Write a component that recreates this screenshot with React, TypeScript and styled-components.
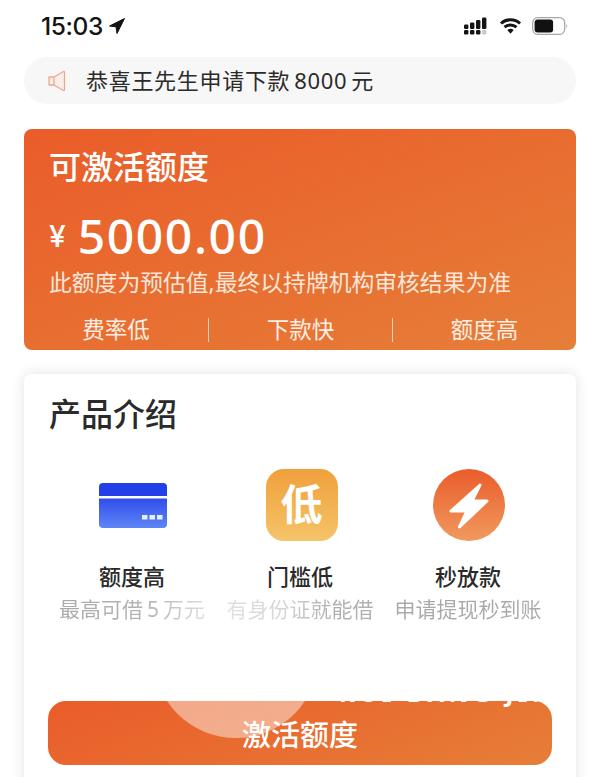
import React from 'react';
import styled, { createGlobalStyle } from 'styled-components';

const GlobalStyle = createGlobalStyle`
  html, body {
    margin: 0;
    padding: 0;
    background: #ffffff;
  }
  body {
    font-family: "Noto Sans", "Noto Sans CJK SC", sans-serif;
  }
`;

const orange = 'linear-gradient(160deg, #ea5c29 0%, #e67e38 100%)';

const Page = styled.div`
  width: 600px;
  height: 777px;
  overflow: hidden;
  background: #ffffff;
`;

const StatusBar = styled.div`
  height: 57px;
  padding: 0 32px 5px 41px;
  box-sizing: border-box;
  display: flex;
  align-items: center;
  justify-content: space-between;
`;

const TimeGroup = styled.div`
  display: flex;
  align-items: center;
  gap: 5px;
`;

const Time = styled.span`
  font-family: "Inter", sans-serif;
  font-size: 24.5px;
  font-weight: 500;
  letter-spacing: -0.4px;
  color: #141414;
`;

const StatusIcons = styled.div`
  display: flex;
  align-items: center;
  gap: 10px;
`;

const Notice = styled.div`
  height: 47px;
  margin: 0 24px;
  padding-left: 24px;
  border-radius: 23px;
  background: #f7f7f7;
  display: flex;
  align-items: center;
  gap: 20px;
`;

const NoticeText = styled.span`
  margin-bottom: 3px;
  font-size: 22px;
  color: #2b2b2b;
  letter-spacing: 0.7px;
  word-spacing: -2.5px;
`;

const Hero = styled.section`
  height: 221px;
  margin: 25px 24px 0;
  padding: 18px 25px 0;
  box-sizing: border-box;
  border-radius: 8px;
  background: ${orange};
  color: #ffffff;
  position: relative;
`;

const HeroTitle = styled.h1`
  margin: 0;
  font-size: 32px;
  line-height: 40px;
  font-weight: 500;
`;

const Amount = styled.div`
  margin-top: 21px;
  height: 56px;
  display: flex;
  align-items: center;
  gap: 12px;
`;

const Currency = styled.span`
  font-family: "Inter", sans-serif;
  font-size: 30px;
  font-weight: 500;
`;

const AmountValue = styled.span`
  font-size: 48px;
  line-height: 56px;
  font-weight: 500;
  letter-spacing: 1.6px;
`;

const HeroNote = styled.p`
  margin: 4px 0 0;
  font-size: 22.8px;
  line-height: 30px;
  white-space: nowrap;
  color: #fbe6d9;
`;

const Perks = styled.div`
  position: absolute;
  left: 0;
  right: 0;
  bottom: 8px;
  display: grid;
  grid-template-columns: repeat(3, 1fr);
`;

const Perk = styled.div<{ $divided?: boolean }>`
  height: 24px;
  line-height: 24px;
  text-align: center;
  font-size: 22.5px;
  color: #fdeee4;
  border-left: ${({ $divided }) => ($divided ? '1px solid #f6cdb3' : 'none')};
`;

const ProductCard = styled.section`
  height: 420px;
  margin: 24px 24px 0;
  padding: 20px 24px 0;
  box-sizing: border-box;
  border-radius: 8px;
  background: #ffffff;
  box-shadow: 0 0 14px rgba(0, 0, 0, 0.12);
`;

const CardTitle = styled.h2`
  margin: 0 0 0 1px;
  font-size: 32px;
  line-height: 40px;
  font-weight: 500;
  color: #2a2a2a;
`;

const Features = styled.div`
  margin-top: 35px;
  display: grid;
  grid-template-columns: repeat(3, 1fr);
`;

const Feature = styled.div`
  display: flex;
  flex-direction: column;
  align-items: center;
`;

const IconSlot = styled.div<{ $nudge: number }>`
  width: 72px;
  height: 72px;
  margin-left: ${({ $nudge }) => $nudge}px;
  display: flex;
  align-items: center;
  justify-content: center;
`;

const LowBadge = styled.div`
  width: 72px;
  height: 72px;
  flex-shrink: 0;
  border-radius: 18px;
  background: linear-gradient(180deg, #f0a03b 0%, #f5c469 100%);
  color: #ffffff;
  font-size: 42px;
  font-weight: 700;
  line-height: 70px;
  text-align: center;
`;

const FeatureName = styled.div`
  margin-top: 20px;
  font-size: 22px;
  line-height: 30px;
  font-weight: 500;
  color: #2a2a2a;
`;

const FeatureNote = styled.div<{ $fade: string }>`
  margin-top: 4px;
  font-size: 21px;
  line-height: 28px;
  white-space: nowrap;
  word-spacing: -1.5px;
  color: transparent;
  background: ${({ $fade }) => $fade};
  -webkit-background-clip: text;
  background-clip: text;
`;

const ActivateButton = styled.button`
  display: block;
  position: relative;
  width: 100%;
  height: 64px;
  margin-top: 78px;
  padding: 0;
  border: none;
  border-radius: 18px;
  overflow: hidden;
  background: ${orange};
  color: #ffffff;
  font-family: inherit;
  font-size: 29px;
  font-weight: 500;
`;

const ButtonLabel = styled.span`
  position: relative;
`;

const Glow = styled.span`
  position: absolute;
  left: 105px;
  top: -129px;
  width: 166px;
  height: 166px;
  border-radius: 50%;
  background: rgba(255, 255, 255, 0.45);
`;

const Watermark = styled.span`
  position: absolute;
  left: 291px;
  top: -20px;
  font-size: 24px;
  line-height: 24px;
  font-weight: 700;
  letter-spacing: 4.6px;
  white-space: nowrap;
  color: #ffffff;
`;

const LocationArrow = () => (
  <svg width="18" height="18" viewBox="0 0 18 18">
    <path d="M16.5 1.5 L1.5 9 L8 9.8 L9 16.5 Z" fill="#141414" stroke="#141414" strokeLinejoin="round" />
  </svg>
);

const SignalIcon = () => (
  <svg width="26" height="18" viewBox="0 0 26 18">
    <g fill="#141414">
      <rect x="1" y="7.5" width="4.4" height="4.4" rx="1.2" />
      <rect x="1" y="13" width="4.4" height="4.4" rx="1.2" />
      <rect x="7" y="13" width="4.4" height="4.4" rx="1.2" />
      <rect x="7" y="5.5" width="4.4" height="6.4" rx="1.2" />
      <rect x="13" y="13" width="4.4" height="4.4" rx="1.2" />
      <rect x="13" y="3" width="4.4" height="9" rx="1.2" />
      <rect x="19" y="0.5" width="4.4" height="11.4" rx="1.2" />
    </g>
    <rect x="19" y="13" width="4.4" height="4.4" rx="1.2" fill="#c9c9c9" />
  </svg>
);

const WifiIcon = () => (
  <svg width="23" height="18" viewBox="0 0 22 18">
    <path d="M1.5 6.5 A14 14 0 0 1 20.5 6.5" fill="none" stroke="#141414" strokeWidth="3" />
    <path d="M5 10.2 A9 9 0 0 1 17 10.2" fill="none" stroke="#141414" strokeWidth="3" />
    <path d="M7.8 13 A5 5 0 0 1 14.2 13 L11 16.8 Z" fill="#141414" />
  </svg>
);

const BatteryIcon = () => (
  <svg width="36" height="18" viewBox="0 0 36 18">
    <rect x="0.7" y="0.7" width="32" height="16.6" rx="5" fill="none" stroke="#a8a8a8" strokeWidth="1.3" />
    <rect x="2.6" y="2.5" width="18.5" height="13" rx="3" fill="#111111" />
    <path d="M34.4 7 A3 3 0 0 1 34.4 11 Z" fill="#a8a8a8" />
  </svg>
);

const SpeakerIcon = () => (
  <svg width="18" height="22" viewBox="0 0 18 22">
    <path
      d="M1 7 H6 L15.5 1.5 Q16.5 1 16.5 2.2 V19.8 Q16.5 21 15.5 20.5 L6 15 H1 Z M6 7 V15"
      fill="#fbeee8"
      stroke="#e8ab90"
      strokeWidth="1.3"
      strokeLinejoin="round"
    />
  </svg>
);

const CreditCardIcon = () => (
  <svg width="68" height="45" viewBox="0 0 68 45">
    <defs>
      <linearGradient id="cardBody" x1="0" y1="0" x2="0" y2="1">
        <stop offset="0" stopColor="#2f4ee9" />
        <stop offset="1" stopColor="#5f86f6" />
      </linearGradient>
    </defs>
    <path d="M0 13 V4 Q0 0 4 0 H64 Q68 0 68 4 V13 Z" fill="#2340e8" />
    <path d="M0 15.5 H68 V41 Q68 45 64 45 H4 Q0 45 0 41 Z" fill="url(#cardBody)" />
    <g fill="#e6edff">
      <rect x="43" y="32" width="5.5" height="4.5" />
      <rect x="50.5" y="32" width="5.5" height="4.5" />
      <rect x="58" y="32" width="5.5" height="4.5" />
    </g>
  </svg>
);

const FlashIcon = () => (
  <svg width="72" height="72" viewBox="0 0 72 72">
    <defs>
      <linearGradient id="flashBg" x1="0" y1="0" x2="0" y2="1">
        <stop offset="0" stopColor="#ea5c2b" />
        <stop offset="1" stopColor="#f09a5e" />
      </linearGradient>
    </defs>
    <circle cx="36" cy="36" r="36" fill="url(#flashBg)" />
    <path
      d="M47 16 L18 42 H34 L26.5 58 L54 32 H39 Z"
      fill="#ffffff"
      stroke="#ffffff"
      strokeWidth="3"
      strokeLinejoin="round"
    />
  </svg>
);

const features = [
  {
    name: '额度高',
    note: '最高可借 5 万元',
    nudge: 1,
    fade: 'linear-gradient(90deg, #a9a9a9 0%, #b4b4b4 60%, #dcdcdc 100%)',
    icon: <CreditCardIcon />,
  },
  {
    name: '门槛低',
    note: '有身份证就能借',
    nudge: 3,
    fade: 'linear-gradient(90deg, #e0e0e0 0%, #d4d4d4 40%, #b0b0b0 70%, #b0b0b0 100%)',
    icon: <LowBadge>低</LowBadge>,
  },
  {
    name: '秒放款',
    note: '申请提现秒到账',
    nudge: 2,
    fade: 'linear-gradient(90deg, #a9a9a9 0%, #a9a9a9 100%)',
    icon: <FlashIcon />,
  },
];

export default function App() {
  return (
    <Page>
      <GlobalStyle />
      <StatusBar>
        <TimeGroup>
          <Time>15:03</Time>
          <LocationArrow />
        </TimeGroup>
        <StatusIcons>
          <SignalIcon />
          <WifiIcon />
          <BatteryIcon />
        </StatusIcons>
      </StatusBar>

      <Notice>
        <SpeakerIcon />
        <NoticeText>恭喜王先生申请下款 8000 元</NoticeText>
      </Notice>

      <Hero>
        <HeroTitle>可激活额度</HeroTitle>
        <Amount>
          <Currency>¥</Currency>
          <AmountValue>5000.00</AmountValue>
        </Amount>
        <HeroNote>此额度为预估值,最终以持牌机构审核结果为准</HeroNote>
        <Perks>
          <Perk>费率低</Perk>
          <Perk $divided>下款快</Perk>
          <Perk $divided>额度高</Perk>
        </Perks>
      </Hero>

      <ProductCard>
        <CardTitle>产品介绍</CardTitle>
        <Features>
          {features.map((item) => (
            <Feature key={item.name}>
              <IconSlot $nudge={item.nudge}>{item.icon}</IconSlot>
              <FeatureName>{item.name}</FeatureName>
              <FeatureNote $fade={item.fade}>{item.note}</FeatureNote>
            </Feature>
          ))}
        </Features>
        <ActivateButton>
          <Glow />
          <Watermark>RUI BANG JIN FU</Watermark>
          <ButtonLabel>激活额度</ButtonLabel>
        </ActivateButton>
      </ProductCard>
    </Page>
  );
}
